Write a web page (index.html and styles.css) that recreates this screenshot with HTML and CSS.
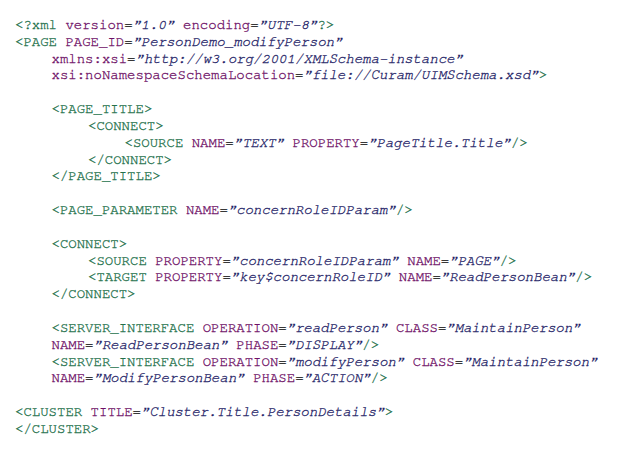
FILE: index.html
```html
<!DOCTYPE html>
<html>
<head>
<meta charset="utf-8">
<link rel="stylesheet" href="styles.css">
</head>
<body>
<div class="code">
<div class="ln"><span class="t">&lt;?xml</span> <span class="a">version</span>=<span class="v">”1.0”</span> <span class="a">encoding</span>=<span class="v">”UTF-8”</span><span class="t">?&gt;</span></div>
<div class="ln"><span class="t">&lt;PAGE</span> <span class="a">PAGE_ID</span>=<span class="v">”PersonDemo_modifyPerson”</span></div>
<div class="ln i1"><span class="a">xmlns:xsi</span>=<span class="v">”http://w3.org/2001/XMLSchema-instance”</span></div>
<div class="ln i1"><span class="a">xsi:noNamespaceSchemaLocation</span>=<span class="v">”file://Curam/UIMSchema.xsd”</span><span class="t">&gt;</span></div>
<div class="ln"> </div>
<div class="ln i1"><span class="t">&lt;PAGE_TITLE&gt;</span></div>
<div class="ln i2"><span class="t">&lt;CONNECT&gt;</span></div>
<div class="ln i3"><span class="t">&lt;SOURCE</span> <span class="a">NAME</span>=<span class="v">”TEXT”</span> <span class="a">PROPERTY</span>=<span class="v">”PageTitle.Title”</span><span class="t">/&gt;</span></div>
<div class="ln i2"><span class="t">&lt;/CONNECT&gt;</span></div>
<div class="ln i1"><span class="t">&lt;/PAGE_TITLE&gt;</span></div>
<div class="ln"> </div>
<div class="ln i1"><span class="t">&lt;PAGE_PARAMETER</span> <span class="a">NAME</span>=<span class="v">”concernRoleIDParam”</span><span class="t">/&gt;</span></div>
<div class="ln"> </div>
<div class="ln i1"><span class="t">&lt;CONNECT&gt;</span></div>
<div class="ln i2"><span class="t">&lt;SOURCE</span> <span class="a">PROPERTY</span>=<span class="v">”concernRoleIDParam”</span> <span class="a">NAME</span>=<span class="v">”PAGE”</span><span class="t">/&gt;</span></div>
<div class="ln i2"><span class="t">&lt;TARGET</span> <span class="a">PROPERTY</span>=<span class="v">”key$concernRoleID”</span> <span class="a">NAME</span>=<span class="v">”ReadPersonBean”</span><span class="t">/&gt;</span></div>
<div class="ln i1"><span class="t">&lt;/CONNECT&gt;</span></div>
<div class="ln"> </div>
<div class="ln i1"><span class="t">&lt;SERVER_INTERFACE</span> <span class="a">OPERATION</span>=<span class="v">”readPerson”</span> <span class="a">CLASS</span>=<span class="v">”MaintainPerson”</span></div>
<div class="ln i1"><span class="a">NAME</span>=<span class="v">”ReadPersonBean”</span> <span class="a">PHASE</span>=<span class="v">”DISPLAY”</span><span class="t">/&gt;</span></div>
<div class="ln i1"><span class="t">&lt;SERVER_INTERFACE</span> <span class="a">OPERATION</span>=<span class="v">”modifyPerson”</span> <span class="a">CLASS</span>=<span class="v">”MaintainPerson”</span></div>
<div class="ln i1"><span class="a">NAME</span>=<span class="v">”ModifyPersonBean”</span> <span class="a">PHASE</span>=<span class="v">”ACTION”</span><span class="t">/&gt;</span></div>
<div class="ln"> </div>
<div class="ln"><span class="t">&lt;CLUSTER</span> <span class="a">TITLE</span>=<span class="v">”Cluster.Title.PersonDetails”</span><span class="t">&gt;</span></div>
<div class="ln"><span class="t">&lt;/CLUSTER&gt;</span></div>
</div>
</body>
</html>
```
FILE: styles.css
```css
html, body {
  margin: 0;
  padding: 0;
  background: #ffffff;
}
.code {
  padding: 17px 0 0 15px;
  font-family: "FreeMono", "Liberation Mono", monospace;
  font-size: 14px;
  line-height: 16.83px;
  color: #000000;
  -webkit-text-stroke: 0.3px currentColor;
}
.ln {
  white-space: pre;
  height: 16.83px;
}
.i1 { padding-left: 36.5px; }
.i2 { padding-left: 73px; }
.i3 { padding-left: 109.5px; }
.t { color: #22704a; }
.a { color: #6e0f66; }
.v { color: #1e2266; font-style: italic; }
```
